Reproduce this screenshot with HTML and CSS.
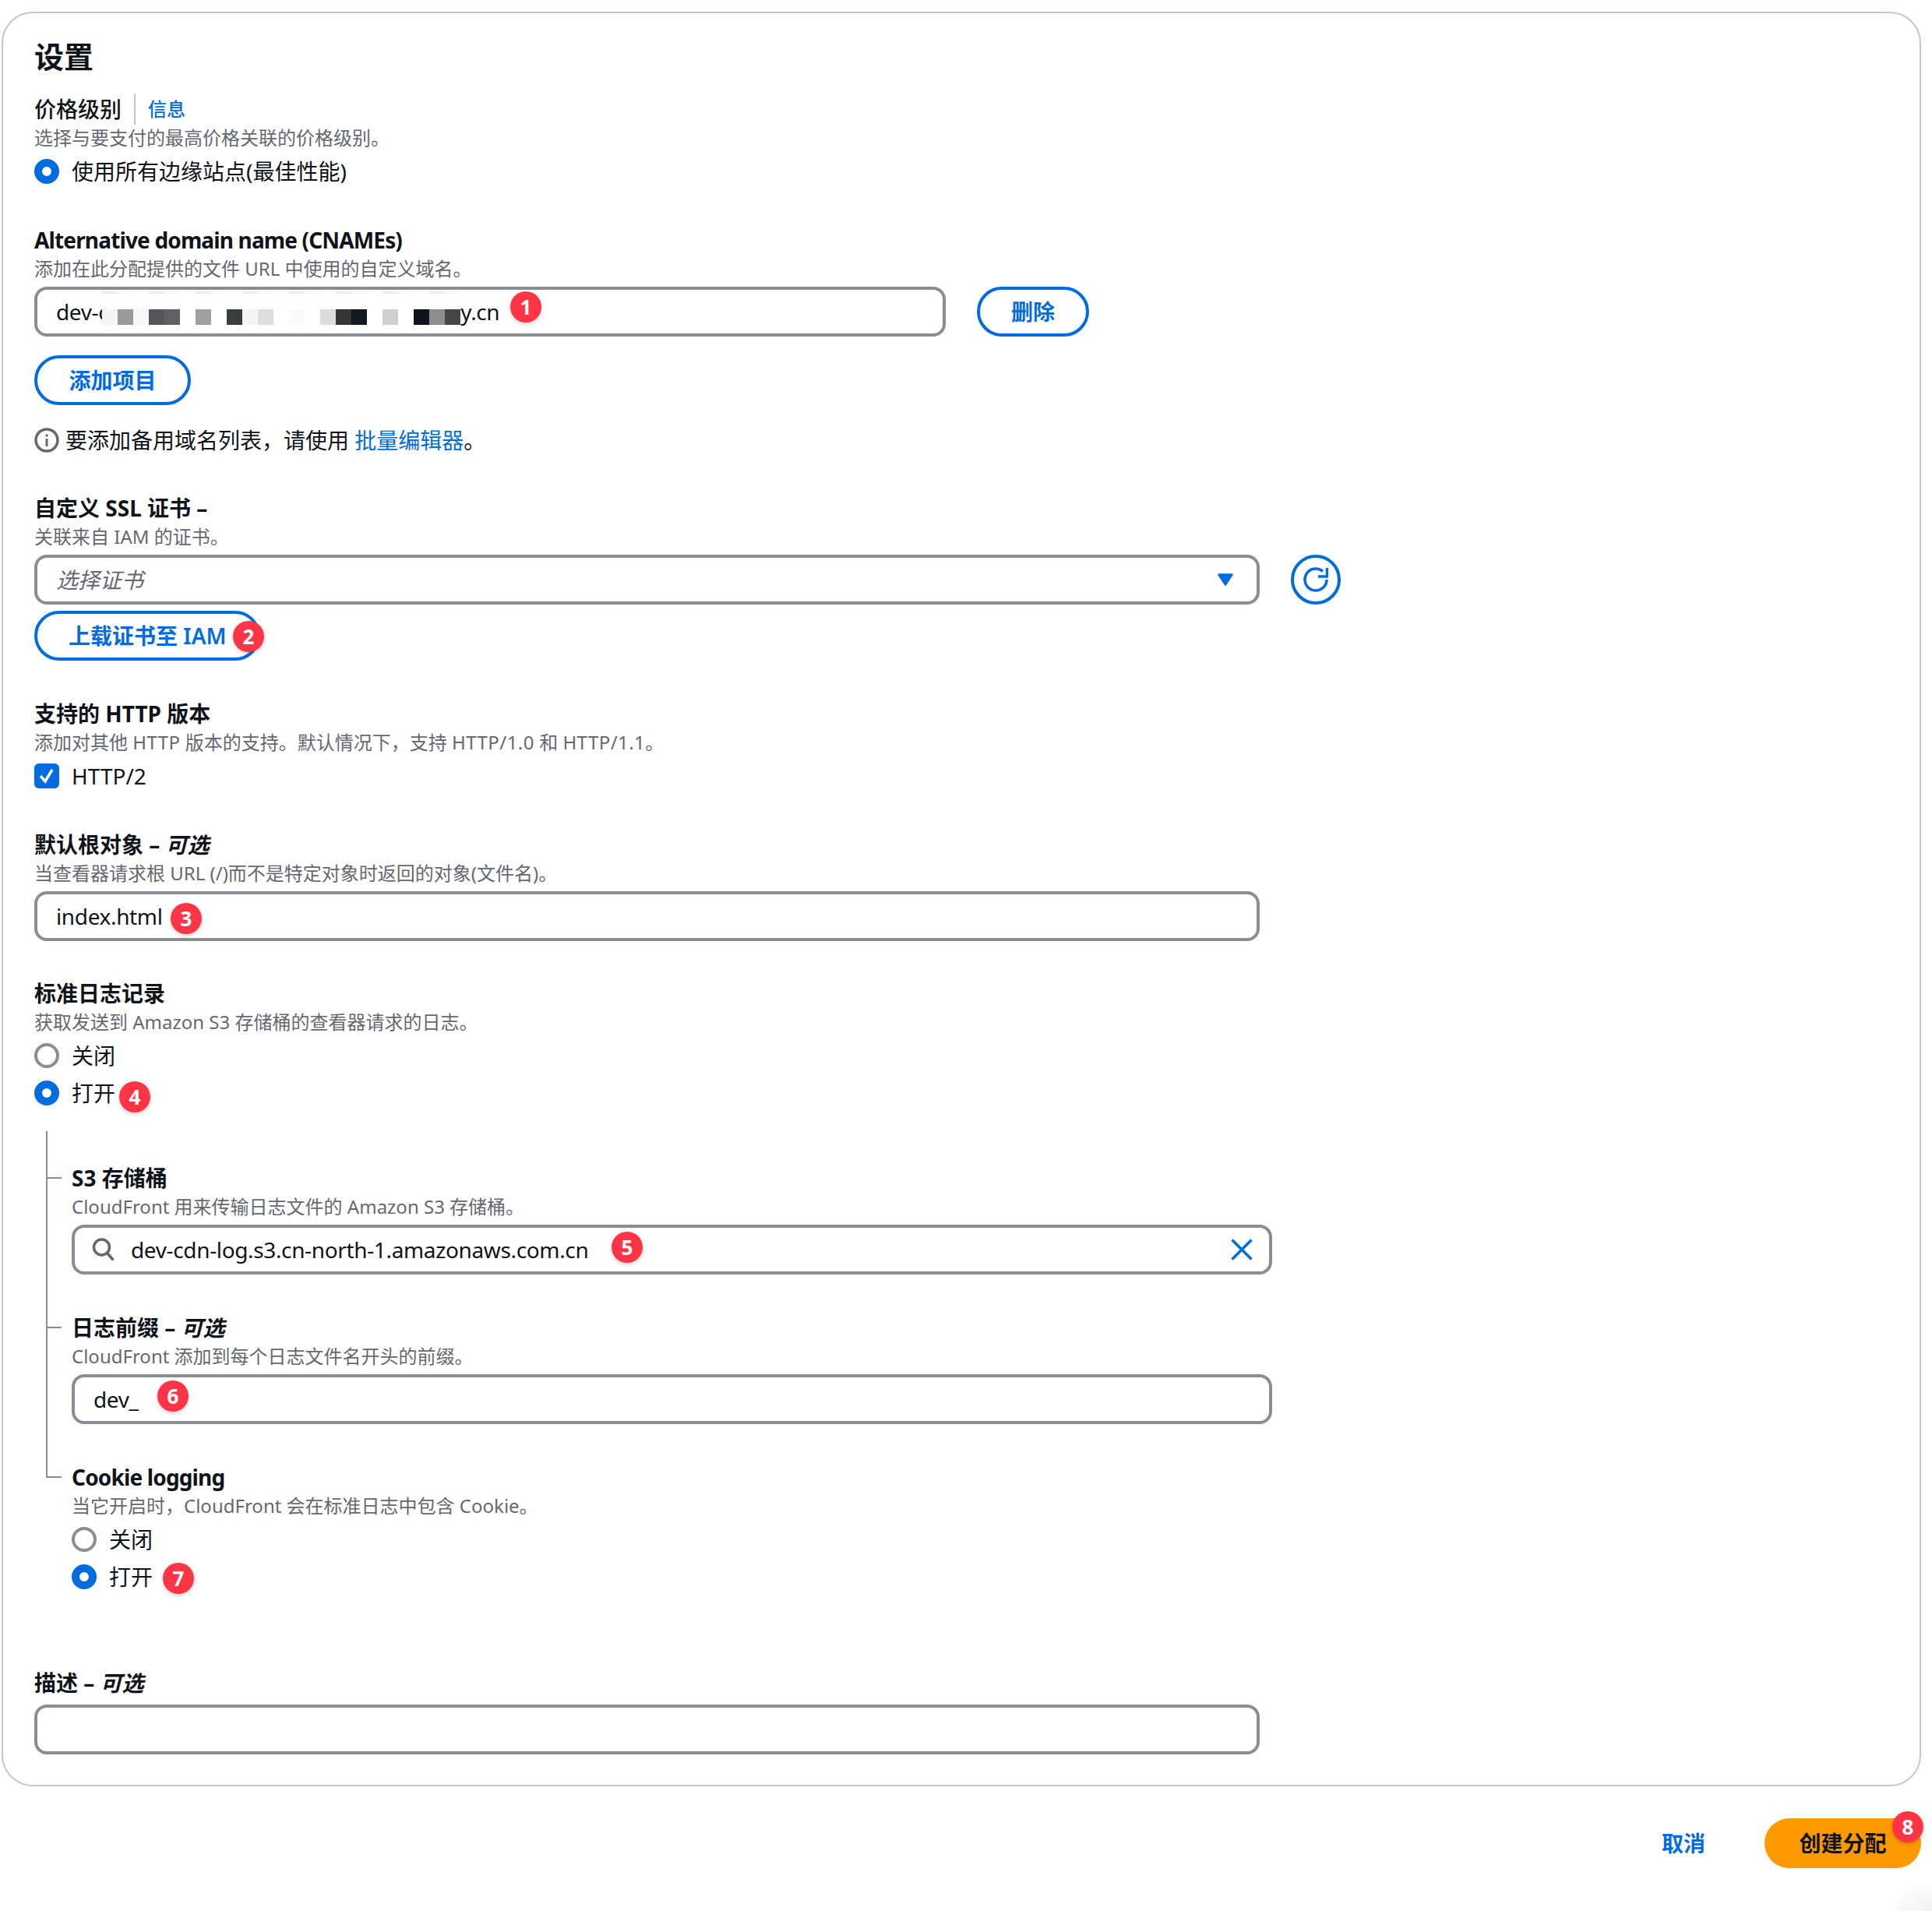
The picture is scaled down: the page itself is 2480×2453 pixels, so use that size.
FILE: index.html
```html
<!DOCTYPE html>
<html lang="zh-CN">
<head>
<meta charset="utf-8">
<title>设置</title>
<link rel="stylesheet" href="styles.css">
</head>
<body>
<main class="page">
  <section class="panel">
    <h2 class="title">设置</h2>

    <div class="field f-price">
      <div class="label normal">价格级别<span class="sep"></span><a class="info">信息</a></div>
      <p class="desc">选择与要支付的最高价格关联的价格级别。</p>
      <label class="choice"><span class="radio on"></span>使用所有边缘站点(最佳性能)</label>
    </div>

    <div class="field f-alt">
      <div class="label tight">Alternative domain name (CNAMEs)</div>
      <p class="desc">添加在此分配提供的文件 URL 中使用的自定义域名。</p>
      <div class="row">
        <div class="input w-alt">dev-c<span class="mask"><svg class="mask-svg" width="460" height="44" viewBox="0 0 460 44">
          <rect x="0" y="3" width="20" height="20" fill="#fff"/>
          <g fill="#ececec"><rect x="0" width="20" height="3"/><rect x="60" width="20" height="3"/><rect x="120" width="20" height="3"/><rect x="180" width="20" height="3"/><rect x="240" width="20" height="3"/><rect x="300" width="20" height="3"/><rect x="360" width="20" height="3"/><rect x="420" width="20" height="3"/></g>
          <g fill="#f8f8f8"><rect x="20" width="20" height="3"/><rect x="80" width="20" height="3"/><rect x="140" width="20" height="3"/><rect x="200" width="20" height="3"/><rect x="260" width="20" height="3"/><rect x="320" width="20" height="3"/><rect x="380" width="20" height="3"/><rect x="440" width="20" height="3"/></g>
          <rect x="0" y="23" width="20" height="20" fill="#f5f5f5"/><rect x="20" y="23" width="20" height="20" fill="#9a9a9a"/><rect x="40" y="23" width="20" height="20" fill="#f7f7f7"/><rect x="60" y="23" width="20" height="20" fill="#555658"/><rect x="80" y="23" width="20" height="20" fill="#5f6063"/><rect x="120" y="23" width="20" height="20" fill="#a0a0a0"/><rect x="160" y="23" width="20" height="20" fill="#3a3d40"/><rect x="180" y="23" width="20" height="20" fill="#f4f4f4"/><rect x="200" y="23" width="20" height="20" fill="#dedede"/><rect x="240" y="23" width="20" height="20" fill="#fafafa"/><rect x="280" y="23" width="20" height="20" fill="#dcdcdc"/><rect x="300" y="23" width="20" height="20" fill="#333538"/><rect x="320" y="23" width="20" height="20" fill="#151a22"/><rect x="360" y="23" width="20" height="20" fill="#d0d0d0"/><rect x="400" y="23" width="20" height="20" fill="#0f141c"/><rect x="420" y="23" width="20" height="20" fill="#8e8e8e"/><rect x="440" y="23" width="20" height="20" fill="#45464a"/>
        </svg></span>y.cn<span class="badge b1">1</span></div>
        <button class="btn btn-del">删除</button>
      </div>
      <button class="btn btn-add">添加项目</button>
      <p class="note"><svg class="note-icon" width="32" height="32" viewBox="0 0 32 32"><circle cx="16" cy="16" r="14" fill="none" stroke="#656871" stroke-width="3.500"/><rect x="14.500" y="14" width="3" height="10" fill="#656871"/><rect x="14.500" y="8.500" width="3" height="3" fill="#656871"/></svg>要添加备用域名列表，请使用 <a class="link">批量编辑器</a>。</p>
    </div>

    <div class="field f-ssl">
      <div class="label">自定义 SSL 证书 –</div>
      <p class="desc">关联来自 IAM 的证书。</p>
      <div class="row">
        <div class="input w-full select"><em class="placeholder">选择证书</em><svg class="chev" width="20" height="16" viewBox="0 0 20 16"><path d="M1.500 1.500h17L10 14.500z" fill="#006ce0" stroke="#006ce0" stroke-width="2.500" stroke-linejoin="round"/></svg></div>
        <button class="btn btn-icon"><svg width="32" height="32" viewBox="0 0 32 32" fill="none" stroke="#006ce0" stroke-width="3.500"><path d="M30 16a14 14 0 1 1-5-10.700"/><path d="M30.500 1v11h-11.500"/></svg></button>
      </div>
      <button class="btn btn-upload">上载证书至 IAM<span class="badge b2">2</span></button>
    </div>

    <div class="field f-http">
      <div class="label">支持的 HTTP 版本</div>
      <p class="desc">添加对其他 <span class="wide">HTTP</span> 版本的支持。默认情况下，支持 <span class="wide">HTTP/1.0</span> 和 <span class="wide">HTTP/1.1</span>。</p>
      <label class="choice"><span class="check"><svg width="32" height="32" viewBox="0 0 32 32"><path d="M8 16l6 7L23 8" fill="none" stroke="#fff" stroke-width="3.500"/></svg></span>HTTP/2</label>
    </div>

    <div class="field f-root">
      <div class="label">默认根对象 – <em>可选</em></div>
      <p class="desc">当查看器请求根 URL (/)而不是特定对象时返回的对象(文件名)。</p>
      <div class="input w-full">index.html<span class="badge b3">3</span></div>
    </div>

    <div class="field f-log">
      <div class="label">标准日志记录</div>
      <p class="desc">获取发送到 Amazon S3 存储桶的查看器请求的日志。</p>
      <label class="choice"><span class="radio"></span>关闭</label>
      <label class="choice c-next">
        <span class="radio on"></span>打开<span class="badge b4">4</span></label>
    </div>

    <div class="tree">
      <div class="field branch f-s3">
        <div class="label">S3 存储桶</div>
        <p class="desc">CloudFront 用来传输日志文件的 Amazon S3 存储桶。</p>
        <div class="input w-search search">
          <svg class="search-icon" width="30" height="30" viewBox="0 0 30 30" fill="none" stroke="#656871" stroke-width="3.500"><circle cx="12.500" cy="12" r="10"/><path d="M19.500 19.500l8 9"/></svg>dev-cdn-log.s3.cn-north-1.amazonaws.com.cn<span class="badge b5">5</span>
          <svg class="clear" width="28" height="28" viewBox="0 0 28 28" fill="none" stroke="#006ce0" stroke-width="3.500"><path d="M1.500 1.500l25 25M26.500 1.500l-25 25"/></svg>
        </div>
      </div>
      <div class="field branch f-prefix">
        <div class="label">日志前缀 – <em>可选</em></div>
        <p class="desc">CloudFront 添加到每个日志文件名开头的前缀。</p>
        <div class="input w-search">dev_<span class="badge b6">6</span></div>
      </div>
      <div class="field branch f-cookie">
        <div class="label tight">Cookie logging</div>
        <p class="desc">当它开启时，CloudFront 会在标准日志中包含 Cookie。</p>
        <label class="choice"><span class="radio"></span>关闭</label>
        <label class="choice c-next"><span class="radio on"></span>打开<span class="badge b7">7</span></label>
      </div>
    </div>

    <div class="field f-desc">
      <div class="label">描述 – <em>可选</em></div>
      <div class="input w-full"></div>
    </div>
  </section>

  <footer class="footer">
    <a class="cancel">取消</a>
    <button class="primary">创建分配<span class="badge b8">8</span></button>
  </footer>
</main>
</body>
</html>
```
FILE: styles.css
```css
* { box-sizing: border-box; }
html, body { margin: 0; padding: 0; background: #fff; }
body {
  font-family: "Noto Sans", "Noto Sans CJK SC", sans-serif;
  font-size: 28px;
  line-height: 36px;
  color: #0f141a;
}
.page { position: relative; height: 2453px; overflow: hidden; padding: 15px 14px 0 2px; }
.page::after {
  content: "";
  position: absolute;
  right: -60px;
  bottom: -60px;
  width: 120px;
  height: 100px;
  background: radial-gradient(closest-side, rgba(0,0,0,.07), rgba(0,0,0,0));
}
.panel {
  height: 2278px;
  border: 2px solid #c6c6cd;
  border-radius: 40px;
  padding: 29px 40px 0;
}
.title { margin: 0; font-size: 38px; line-height: 52px; font-weight: 700; }
.field { position: relative; }
.f-price { margin-top: 24px; }
.f-alt { margin-top: 54px; }
.f-ssl { margin-top: 53px; }
.f-http { margin-top: 50px; }
.f-root { margin-top: 54px; }
.f-log { margin-top: 49px; }
.f-desc { margin-top: 102px; }
.f-desc .input { margin-top: 10px; }

.label { font-weight: 700; height: 36px; display: flex; align-items: center; white-space: pre; }
.label em { font-style: italic; }
.label.normal { font-weight: 500; }
.label.tight { letter-spacing: -.85px; }
.sep { width: 2px; height: 40px; background: #c6c6cd; margin: 0 16px; }
.info { font-size: 24px; color: #006ce0; font-weight: 500; }
.desc { margin: 3px 0 0; font-size: 24px; line-height: 32px; color: #656871; }
.wide { letter-spacing: .45px; }
.row { display: flex; gap: 40px; }

.choice { position: relative; display: flex; align-items: center; gap: 16px; height: 32px; margin-top: 11px; }
.c-next { margin-top: 16px; }
.radio { width: 32px; height: 32px; border-radius: 50%; border: 4px solid #8c8c94; background: #fff; flex: none; }
.radio.on { border: 10px solid #006ce0; }
.check { width: 32px; height: 32px; border-radius: 6px; background: #006ce0; flex: none; display: flex; }

.input {
  position: relative;
  display: flex;
  align-items: center;
  flex: none;
  height: 64px;
  margin-top: 7px;
  padding: 0 24px;
  border: 4px solid #8c8c94;
  border-radius: 16px;
  background: #fff;
  white-space: pre;
  letter-spacing: -.36px;
}
.w-alt { width: 1170px; }
.w-full { width: 1573px; }
.w-search { width: 1541px; }
.mask { position: relative; width: 460px; height: 36px; flex: none; margin-left: -8px; }
.mask-svg { position: absolute; left: 0; top: -8px; }
.select { justify-content: space-between; }
.placeholder { color: #656871; font-style: italic; letter-spacing: 0; }
.chev { margin-right: 6px; }
.search { padding-left: 72px; }
.search-icon { position: absolute; left: 22px; top: 13px; }
.clear { position: absolute; left: 1484px; top: 14px; }

.btn {
  position: relative;
  display: block;
  height: 64px;
  padding: 0 40px;
  border: 4px solid #006ce0;
  border-radius: 32px;
  background: #fff;
  color: #006ce0;
  font: 600 28px/36px "Noto Sans", "Noto Sans CJK SC", sans-serif;
}
.btn-del { width: 144px; padding: 0; margin-top: 7px; }
.btn-add { margin-top: 24px; width: 201px; padding: 0; }
.btn-icon { width: 64px; padding: 0; margin-top: 7px; display: flex; align-items: center; justify-content: center; border-radius: 50%; }
.btn-upload { margin-top: 8px; white-space: pre; }
.note { margin: 29px 0 0; height: 32px; display: flex; align-items: center; white-space: pre; font-weight: 400; }
.note-icon { margin-right: 8px; }
.link { color: #006ce0; }

.tree { position: relative; margin-top: 33px; margin-left: 15px; padding-left: 33px; padding-top: 42px; }
.tree::before { content: ""; position: absolute; left: 0; top: 0; width: 2px; height: 445px; background: #8c8c94; }
.branch::before { content: ""; position: absolute; left: -33px; top: 17px; width: 20px; height: 2px; background: #8c8c94; }
.f-prefix { margin-top: 50px; }
.f-cookie { margin-top: 50px; }

.badge {
  position: absolute;
  width: 40px;
  height: 40px;
  border-radius: 50%;
  background: #ff3546;
  color: #fff;
  font: 700 26px/40px "Noto Sans", sans-serif;
  letter-spacing: 0;
  text-align: center;
  box-shadow: 0 2px 5px rgba(0,0,0,.2);
}
.b1 { left: 607px; top: 2px; }
.b2 { left: 251px; top: 9px; }
.b3 { left: 171px; top: 11px; }
.b4 { left: 109px; top: 1px; }
.b5 { left: 689px; top: 5px; }
.b6 { left: 106px; top: 4px; }
.b7 { left: 117px; top: -2px; }
.b8 { left: 164px; top: -9px; }

.footer { display: flex; justify-content: flex-end; align-items: center; gap: 76px; margin-top: 41px; }
.cancel { color: #006ce0; font-weight: 600; }
.primary {
  position: relative;
  width: 201px;
  height: 64px;
  border: 0;
  border-radius: 32px;
  background: #ff9900;
  color: #0f141a;
  font: 600 28px/36px "Noto Sans", "Noto Sans CJK SC", sans-serif;
  padding: 0;
}
```
